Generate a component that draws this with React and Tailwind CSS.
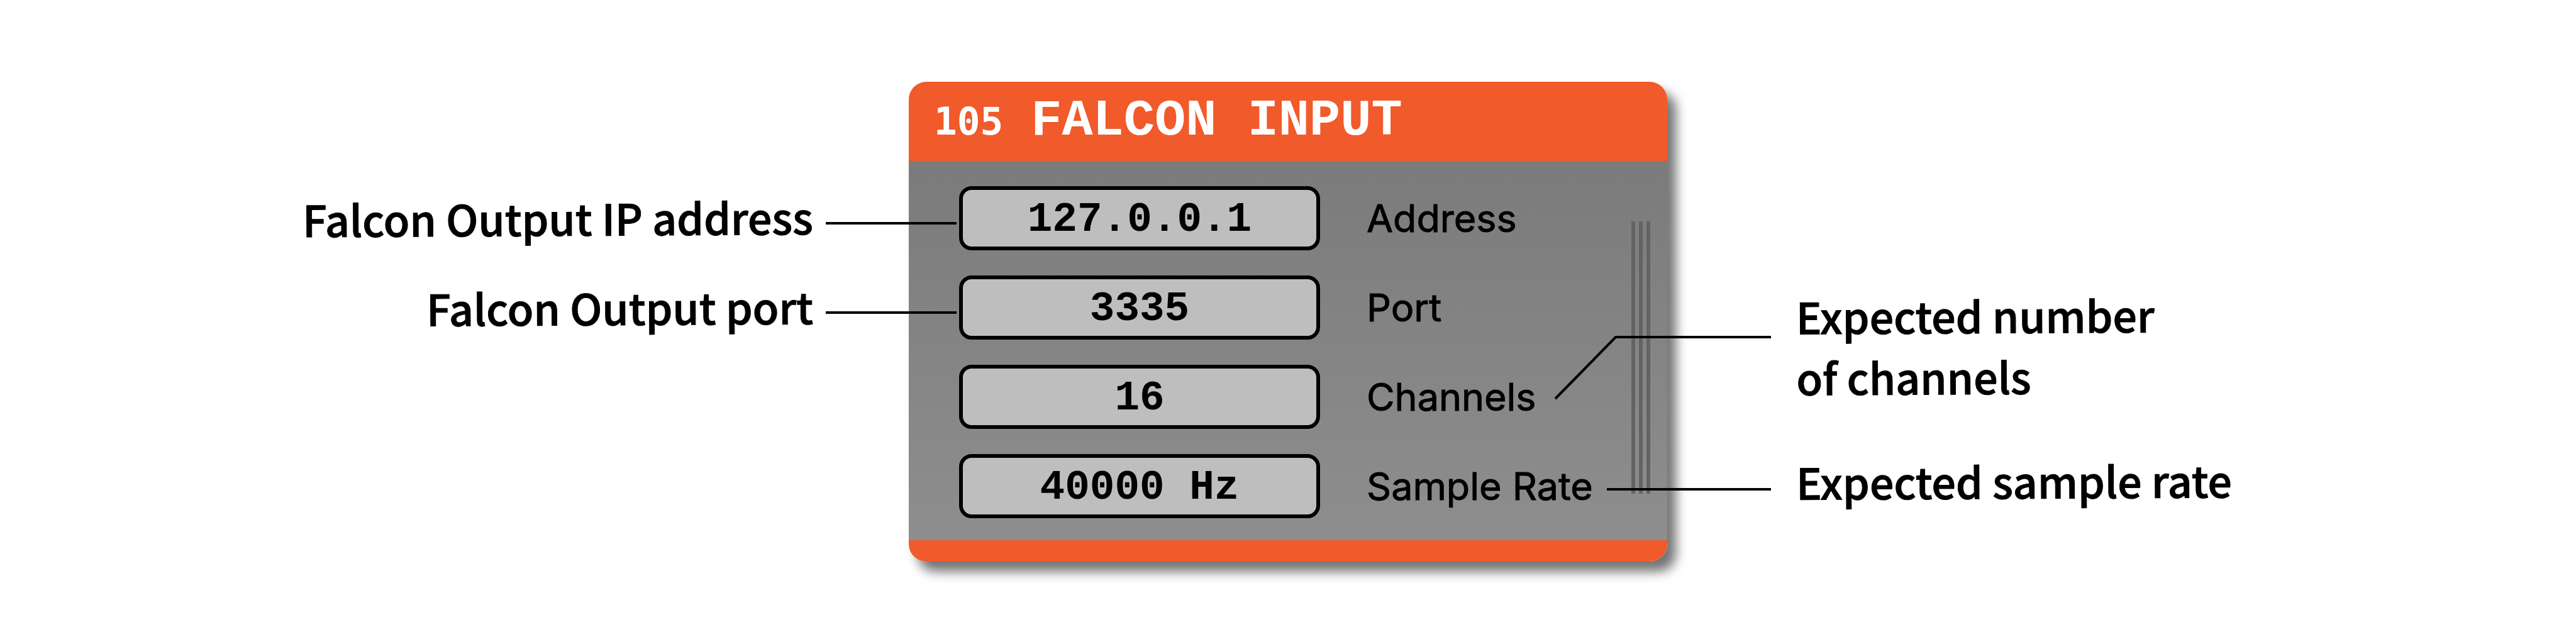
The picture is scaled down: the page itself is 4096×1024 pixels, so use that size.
const fields = [
  { id: 'address', label: 'Address', value: '127.0.0.1' },
  { id: 'port', label: 'Port', value: '3335' },
  { id: 'channels', label: 'Channels', value: '16' },
  { id: 'sample-rate', label: 'Sample Rate', value: '40000 Hz' },
];

function Note({ children }) {
  return (
    <p className="shrink-0 -rotate-[0.3deg] whitespace-nowrap font-['Noto_Sans_CJK_SC','Noto_Sans',sans-serif] text-[68px] leading-[97px] font-medium [-webkit-text-stroke:1px_black]">
      {children}
    </p>
  );
}

function LeftNote({ children }) {
  return (
    <div className="-mr-[76px] flex h-[118px] items-center justify-end gap-5">
      <div className="pb-5">
        <Note>{children}</Note>
      </div>
      <div className="h-1 w-[208px] shrink-0 bg-black" />
    </div>
  );
}

function Processor() {
  return (
    <section className="w-[1206px] shrink-0 overflow-hidden rounded-[28px] bg-[#f15a2b]">
      <header className="flex h-[126px] items-baseline pl-10 text-white">
        <span className="font-['DejaVu_Sans_Mono',monospace] text-[61px] leading-[126px] font-bold">105</span>
        <h1 className="ml-11 font-['Liberation_Mono',monospace] text-[82px] leading-[126px] font-bold">FALCON INPUT</h1>
      </header>
      <div className="flex justify-between bg-linear-to-b from-[#7b7b7b] to-[#8e8e8e] pt-10 pr-[27px] pb-[35px] pl-20">
        <form className="flex flex-col gap-10">
          {fields.map((field) => (
            <div key={field.id} className="flex h-[102px] items-center gap-[74px]">
              <input
                id={field.id}
                type="text"
                defaultValue={field.value}
                className="h-full w-[574px] rounded-[20px] border-6 border-black bg-[#bebebe] pt-1 text-center font-['Liberation_Mono',monospace] text-[66px] font-bold text-black"
              />
              <label htmlFor={field.id} className="font-['Inter',sans-serif] text-[61px] leading-[102px] whitespace-nowrap [-webkit-text-stroke:1px_black]">
                {field.label}
              </label>
            </div>
          ))}
        </form>
        <div className="mt-14 flex h-[433px] gap-[6px]">
          <div className="w-[6px] bg-[#636363]" />
          <div className="w-[6px] bg-[#636363]" />
          <div className="w-[6px] bg-[#636363]" />
        </div>
      </div>
      <div className="h-[34px]" />
    </section>
  );
}

export default function App() {
  return (
    <main className="flex min-h-screen items-start overflow-hidden bg-white pt-[130px] text-black">
      <aside className="z-10 flex min-w-0 flex-1 flex-col gap-6 pt-[166px]">
        <LeftNote>Falcon Output IP address</LeftNote>
        <LeftNote>Falcon Output port</LeftNote>
      </aside>
      <div className="rounded-[28px] shadow-[14px_16px_18px_rgba(0,0,0,0.55)]">
        <Processor />
      </div>
      <aside className="z-10 flex min-w-0 flex-1 flex-col gap-[69px] pt-[322px]">
        <div className="-ml-[180px] flex items-start gap-10">
          <svg className="mt-[82px] shrink-0" width="345" height="102" viewBox="0 0 345 102" fill="none" stroke="black" strokeWidth="4">
            <path d="M2 100 L98 2 H345" />
          </svg>
          <Note>
            Expected number
            <br />
            of channels
          </Note>
        </div>
        <div className="-ml-[96px] flex items-start gap-10">
          <div className="mt-[61px] h-1 w-[261px] shrink-0 bg-black" />
          <Note>Expected sample rate</Note>
        </div>
      </aside>
    </main>
  );
}
